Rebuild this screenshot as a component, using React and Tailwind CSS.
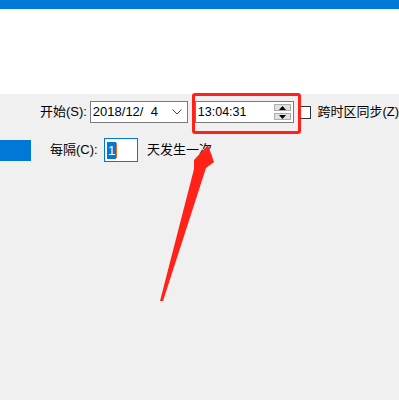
const font = { fontFamily: '"Liberation Sans", "Noto Sans CJK SC", sans-serif' }

function Spinner() {
    return (
        <div className="flex flex-col gap-[2px] mr-[2px]">
            <div className="w-[17px] h-[7px] bg-[#e1e1e1] border border-[#adadad] flex items-center justify-center">
                <svg width="7" height="4" viewBox="0 0 7 4"><path d="M0 4 L3.5 0 L7 4 Z" fill="#000" /></svg>
            </div>
            <div className="w-[17px] h-[7px] bg-[#e1e1e1] border border-[#adadad] flex items-center justify-center">
                <svg width="7" height="4" viewBox="0 0 7 4"><path d="M0 0 L3.5 4 L7 0 Z" fill="#000" /></svg>
            </div>
        </div>
    )
}

export default function App() {
    return (
        <div className="w-[399px] h-[400px] bg-[#f0f0f0] relative overflow-hidden text-[13px] text-black" style={font}>
            {/* title strip */}
            <div className="h-[9px] bg-[#0078d7]" />
            <div className="h-[85px] bg-white" />

            {/* start row */}
            <div className="flex items-center h-[22px] mt-[7px]">
                <span className="ml-[40px] w-[51px]">开始(S):</span>
                <div className="w-[100px] h-[22px] bg-white border border-[#7a7a7a] flex items-center pl-[2px] pr-[5px]">
                    <span className="flex-1 whitespace-pre">2018/12/  4</span>
                    <svg width="10" height="6" viewBox="0 0 10 6"><path d="M0.5 0.5 L5 5 L9.5 0.5" fill="none" stroke="#444" strokeWidth="1" /></svg>
                </div>
                <div className="ml-[7px] w-[101px] h-[22px] bg-white border border-[#7a7a7a] flex items-center pl-[2px]">
                    <span className="flex-1 text-[12.5px]">13:04:31</span>
                    <Spinner />
                </div>
                <div className="ml-[5px] w-[13px] h-[13px] bg-white border border-[#333]" />
                <span className="ml-[6px] whitespace-nowrap">跨时区同步(Z)</span>
            </div>

            {/* interval row */}
            <div className="flex items-center h-[24px] mt-[15px]">
                <div className="w-[31px] h-[21px] bg-[#0078d7]" />
                <span className="ml-[19px] w-[54px]">每隔(C):</span>
                <div className="w-[34px] h-[24px] bg-white border border-[#0078d7] flex items-center pl-[2px]">
                    <span className="bg-[#0078d7] text-white leading-[17px] px-[1px]">1</span>
                    <span className="w-[1px] h-[15px] bg-[#e07020]" />
                </div>
                <span className="ml-[9px]">天发生一次</span>
            </div>

            {/* highlight box */}
            <div className="absolute left-[192px] top-[93px] w-[109px] h-[41px] border-[3px] border-[#ff2218] rounded-[3px]" />

            {/* arrow */}
            <svg className="absolute left-0 top-0" width="399" height="400" viewBox="0 0 399 400">
                <polygon points="160,301 194,169 194,160 208,145 214,162 206,168 163,301" fill="#ff2218" />
            </svg>
        </div>
    )
}
